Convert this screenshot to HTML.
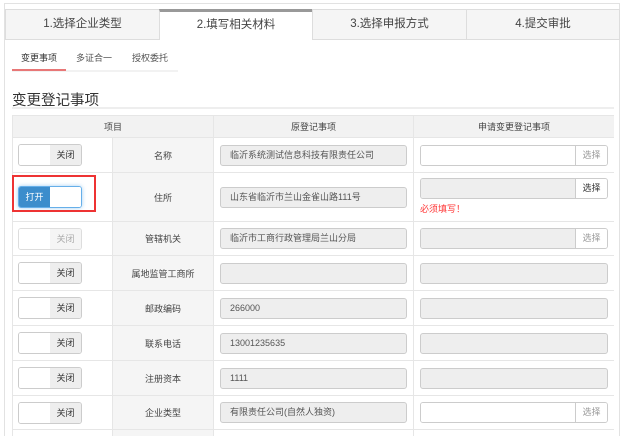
<!DOCTYPE html>
<html><head><meta charset="utf-8"><style>
*{box-sizing:border-box;margin:0;padding:0}
html,body{width:624px;height:436px;overflow:hidden}
body{background:#fff;font-family:"Liberation Sans","Noto Sans CJK SC",sans-serif;color:#333;position:relative}
.frame{position:absolute;left:4px;top:3px;width:616px;height:433px;border:1px solid #e2e2e2;border-bottom:none}
.tab{position:absolute;top:9px;height:31px;border:1px solid #ddd;background:#f5f5f5;font-size:11.5px;text-align:center;line-height:29px;color:#444}
.tab.act{background:#fff;border-top:3px solid #999;border-bottom:none;line-height:27px}
.sub{position:absolute;top:51px;font-size:9px;color:#555}
.clip{position:absolute;left:12px;top:115px;width:602px;height:321px;overflow:hidden}
table{width:602px;border-collapse:collapse;font-size:9px;table-layout:fixed}
td,th{border:1px solid #e6e6e6;text-align:center;vertical-align:middle;font-weight:normal;color:#444}
td.s{text-align:left;padding-left:5px}
th{background:#f2f2f2;height:22px}
td.lb{background:#f5f5f5}
.sw{display:inline-flex;width:64px;height:22px;border:1px solid #ccc;border-radius:3px;overflow:hidden;vertical-align:middle}
.sw span{flex:1;line-height:20px;font-size:9px;text-align:center}
.sw .w{background:#fff}.sw .g{background:#eee;color:#333}
.sw.dis .g{color:#aaa;background:#f5f5f5}.sw.dis{border-color:#ddd}
.sw.on{border-color:#66afe9;box-shadow:0 0 4px rgba(102,175,233,.6)}
.sw .b{background:#3c8dcc;color:#fff}
.in{height:21px;border:1px solid #ccc;border-radius:3px;background:#eee;text-align:left;padding-left:9px;line-height:19px;color:#555;margin:0 6px}
.grp{display:flex;height:21px;margin:0 6px;border:1px solid #ccc;border-radius:3px;overflow:hidden}
.grp .f{flex:1;background:#fff}.grp .f.gr{background:#eee}
.grp .bt{width:32px;border-left:1px solid #ccc;background:#fff;line-height:19px;color:#333}
.grp .bt.l{color:#999}
</style></head><body>
<div class="frame"></div>
<div class="tab" style="left:5px;width:155px">1.选择企业类型</div>
<div class="tab act" style="left:159px;width:154px">2.填写相关材料</div>
<div class="tab" style="left:312px;width:155px">3.选择申报方式</div>
<div class="tab" style="left:466px;width:154px">4.提交审批</div>
<div class="sub" style="left:21px;color:#333">变更事项</div>
<div class="sub" style="left:76px">多证合一</div>
<div class="sub" style="left:132px">授权委托</div>
<div style="position:absolute;left:12px;top:70px;width:166px;height:2px;background:#f2f2f2"></div>
<div style="position:absolute;left:12px;top:69px;width:54px;height:2px;background:#e87777"></div>
<div style="position:absolute;left:12px;top:89px;font-size:14.5px;color:#333">变更登记事项</div>
<div style="position:absolute;left:12px;top:107px;width:602px;height:2px;background:#eee"></div>
<div class="clip"><table>
<colgroup><col style="width:100px"><col style="width:101px"><col style="width:200px"><col style="width:201px"></colgroup>
<tr><th colspan="2">项目</th><th>原登记事项</th><th>申请变更登记事项</th></tr>
<tr style="height:35px"><td class="s"><span class="sw"><span class="w"></span><span class="g">关闭</span></span></td><td class="lb">名称</td><td><div class="in">临沂系统测试信息科技有限责任公司</div></td><td><div class="grp"><div class="f"></div><div class="bt l">选择</div></div></td></tr>
<tr style="height:48px"><td class="s"><span class="sw on"><span class="b">打开</span><span class="w"></span></span></td><td class="lb">住所</td><td><div class="in">山东省临沂市兰山金雀山路111号</div></td><td><div class="grp" style="margin-top:5px"><div class="f gr"></div><div class="bt">选择</div></div><div style="text-align:left;color:#f33;margin:3px 6px 6px;font-size:9px">必须填写！</div></td></tr>
<tr style="height:34px"><td class="s"><span class="sw dis"><span class="w"></span><span class="g">关闭</span></span></td><td class="lb">管辖机关</td><td><div class="in">临沂市工商行政管理局兰山分局</div></td><td><div class="grp"><div class="f gr"></div><div class="bt l">选择</div></div></td></tr>
<tr style="height:35px"><td class="s"><span class="sw"><span class="w"></span><span class="g">关闭</span></span></td><td class="lb">属地监管工商所</td><td><div class="in"></div></td><td><div class="in"></div></td></tr>
<tr style="height:35px"><td class="s"><span class="sw"><span class="w"></span><span class="g">关闭</span></span></td><td class="lb">邮政编码</td><td><div class="in">266000</div></td><td><div class="in"></div></td></tr>
<tr style="height:35px"><td class="s"><span class="sw"><span class="w"></span><span class="g">关闭</span></span></td><td class="lb">联系电话</td><td><div class="in">13001235635</div></td><td><div class="in"></div></td></tr>
<tr style="height:35px"><td class="s"><span class="sw"><span class="w"></span><span class="g">关闭</span></span></td><td class="lb">注册资本</td><td><div class="in">1111</div></td><td><div class="in"></div></td></tr>
<tr style="height:34px"><td class="s"><span class="sw"><span class="w"></span><span class="g">关闭</span></span></td><td class="lb">企业类型</td><td><div class="in">有限责任公司(自然人独资)</div></td><td><div class="grp"><div class="f"></div><div class="bt l">选择</div></div></td></tr>
<tr style="height:34px"><td></td><td class="lb"></td><td></td><td><div class="in"></div></td></tr>
</table></div>
<div style="position:absolute;left:12px;top:175px;width:84px;height:37px;border:2px solid #e33"></div>
</body></html>
